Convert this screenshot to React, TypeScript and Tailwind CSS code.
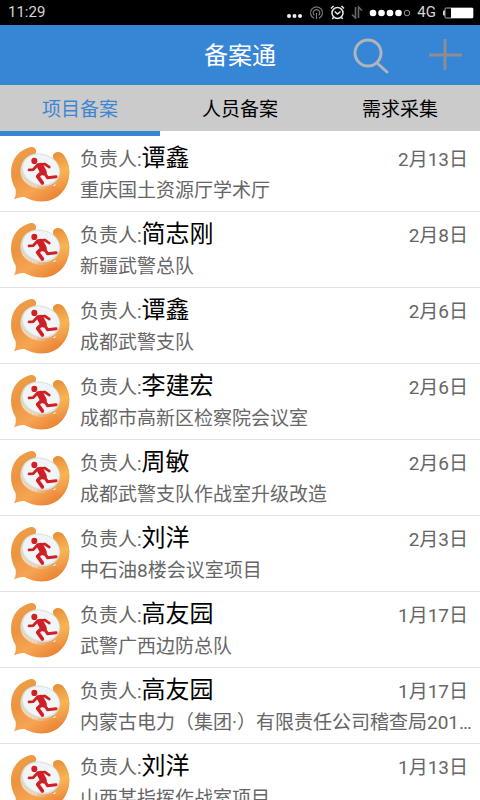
import React, { useState } from 'react';

const tabs = ['项目备案', '人员备案', '需求采集'];

const records = [
  { name: '谭鑫', project: '重庆国土资源厅学术厅', date: '2月13日' },
  { name: '简志刚', project: '新疆武警总队', date: '2月8日' },
  { name: '谭鑫', project: '成都武警支队', date: '2月6日' },
  { name: '李建宏', project: '成都市高新区检察院会议室', date: '2月6日' },
  { name: '周敏', project: '成都武警支队作战室升级改造', date: '2月6日' },
  { name: '刘洋', project: '中石油8楼会议室项目', date: '2月3日' },
  { name: '高友园', project: '武警广西边防总队', date: '1月17日' },
  { name: '高友园', project: '内蒙古电力（集团·）有限责任公司稽查局201…', date: '1月17日' },
  { name: '刘洋', project: '山西某指挥作战室项目', date: '1月13日' },
];

const StatusBar: React.FC = () => (
  <div className="flex h-[25px] shrink-0 items-center justify-between bg-black pl-2 pr-1.5 text-[#d4d4d4]">
    <span className="text-[15px] leading-none">11:29</span>
    <div className="flex items-center gap-1.5">
      <svg width="16" height="14" viewBox="0 0 16 14" fill="#f0f0f0">
        <circle cx="2" cy="10" r="2" />
        <circle cx="7.500" cy="10" r="2" />
        <circle cx="13" cy="10" r="2" />
      </svg>
      <svg width="15" height="14" viewBox="0 0 14 14" fill="none" stroke="#777" strokeWidth="1.200">
        <path d="M4.500 12.300A6 6 0 1 1 9.500 12.300" />
        <path d="M4.800 9.400A3.300 3.300 0 1 1 9.200 9.400" />
        <path d="M7 7v6" />
      </svg>
      <svg width="15" height="15" viewBox="0 0 15 15" fill="none" stroke="#e8e8e8" strokeWidth="1.500">
        <circle cx="7.500" cy="8" r="5.500" />
        <path d="M1 3.500L3.500 1M14 3.500L11.500 1M4.700 6.500L7.500 9l3-2.500M3.500 12.500L2.300 14M11.500 12.500l1.200 1.500" />
      </svg>
      <svg width="12" height="13" viewBox="0 0 12 13" fill="none" stroke="#666" strokeWidth="1.600">
        <path d="M4.500 1v11L1 8.500M7.500 12V1L11 4.500" />
      </svg>
      <svg width="42" height="10" viewBox="0 0 42 10" fill="#fff">
        <circle cx="4" cy="5" r="3.300" />
        <circle cx="12.500" cy="5" r="3.300" />
        <circle cx="21" cy="5" r="3.300" />
        <circle cx="29.500" cy="5" r="3.300" />
        <circle cx="38" cy="5" r="2.800" fill="none" stroke="#999" />
      </svg>
      <span className="text-[15px] leading-none">4G</span>
      <svg width="32" height="12" viewBox="0 0 32 12">
        <path d="M3 3.500H2a1 1 0 0 0-1 1v3a1 1 0 0 0 1 1h1z" fill="#ddd" />
        <rect x="3" y="1" width="28" height="10" rx="1" fill="#000" stroke="#aaa" />
        <rect x="9" y="1" width="22" height="10" fill="#fff" />
      </svg>
    </div>
  </div>
);

const RunnerBadge: React.FC = () => (
  <svg className="mt-2 shrink-0" width="60" height="60" viewBox="30 28 180 174" preserveAspectRatio="none" fill="none">
    <defs>
      <linearGradient id="shell" x1="50" y1="40" x2="150" y2="195" gradientUnits="userSpaceOnUse">
        <stop offset="0" stopColor="#f0a04c" />
        <stop offset="0.350" stopColor="#eb9440" />
        <stop offset="0.700" stopColor="#f6a555" />
        <stop offset="1" stopColor="#ea8533" />
      </linearGradient>
      <linearGradient id="arm" x1="160" y1="50" x2="200" y2="165" gradientUnits="userSpaceOnUse">
        <stop offset="0" stopColor="#e78a35" />
        <stop offset="0.500" stopColor="#f7b552" />
        <stop offset="1" stopColor="#f3a050" stopOpacity="0" />
      </linearGradient>
      <linearGradient id="rim" x1="65" y1="120" x2="150" y2="155" gradientUnits="userSpaceOnUse">
        <stop offset="0" stopColor="#dcd2be" />
        <stop offset="0.600" stopColor="#f0cda2" />
        <stop offset="1" stopColor="#e9a35c" />
      </linearGradient>
    </defs>
    <path
      d="M91 37C102 34 111 43 108 53C106 60 97 60 86 67L74 100L110 150H165L179 110L162 73C157 65 159 56 168 53C177 50 186 53 192 61C202 75 208 91 208 108C208 159 173 195 126 195C105 195 88 190 73 182C64 181 52 185 42 188C47 181 48 173 47 160C38 145 33 130 33 110C33 72 57 46 91 37Z"
      fill="url(#shell)"
    />
    <path d="M168 53C177 50 186 53 192 61C202 75 208 91 208 108C208 132 200 154 187 168L165 150L179 110L162 73C157 65 159 56 168 53Z" fill="url(#arm)" />
    <ellipse cx="119" cy="112" rx="59" ry="46" transform="rotate(14 119 112)" fill="url(#rim)" />
    <path d="M67 123l4 10M73 130l4 10M80 136l4 9M88 141l4 9M97 145l3 8M107 148l2 7" stroke="#f9eeda" strokeWidth="2" />
    <ellipse cx="122" cy="103" rx="59" ry="47" transform="rotate(14 122 103)" fill="#dadedd" />
    <ellipse cx="123" cy="102" rx="55" ry="43" transform="rotate(14 123 102)" fill="#f2f5f5" />
    <g stroke="#cf2027" strokeLinecap="round" strokeLinejoin="round">
      <path d="M87 103L100 102L113 88L134 86L148 95" strokeWidth="8" />
      <path d="M121 93L130 109" strokeWidth="20" />
      <path d="M124 112L113 122L127 141" strokeWidth="11" />
      <path d="M132 110L143 126L168 123" strokeWidth="9" />
    </g>
    <circle cx="103" cy="77" r="9" fill="#cf2027" />
  </svg>
);

export default function App() {
  const [activeTab, setActiveTab] = useState(0);

  return (
    <div className="flex h-screen flex-col overflow-hidden bg-white font-['Roboto','Noto_Sans_CJK_SC',sans-serif]" lang="zh-CN">
      <StatusBar />

      <header className="grid h-[60px] shrink-0 grid-cols-[1fr_auto_1fr] items-center bg-[#3785d5]">
        <h1 className="col-start-2 pt-0.5 text-2xl leading-none text-white">备案通</h1>
        <div className="flex items-center justify-end gap-9 pr-4">
          <button aria-label="搜索">
            <svg width="40" height="40" viewBox="0 0 40 40" fill="none" stroke="#b1b5bb" strokeWidth="3" strokeLinecap="round">
              <circle cx="16" cy="18" r="13" />
              <path d="M25 28l10 9" />
            </svg>
          </button>
          <button aria-label="添加">
            <svg width="36" height="36" viewBox="0 0 36 36" stroke="#8d8e91" strokeWidth="3">
              <path d="M17 2v31M1 18h33" />
            </svg>
          </button>
        </div>
      </header>

      <nav className="grid shrink-0 grid-cols-3">
        {tabs.map((tab, i) => (
          <button key={tab} onClick={() => setActiveTab(i)} className={`text-[19px] leading-none ${activeTab === i ? 'text-[#3f86d0]' : 'text-black'}`}>
            <span className="flex h-[46px] items-center justify-center bg-[#cbcbcb] pt-0.5">{tab}</span>
            <span className={`block h-[5px] ${activeTab === i ? 'bg-[#3785d5]' : 'bg-white'}`} />
          </button>
        ))}
      </nav>

      <ul className="min-h-0 flex-1 overflow-y-auto [scrollbar-width:none]">
        {records.map((r, i) => (
          <li key={i} className="flex h-[76px] border-b border-[#e2e2e2] pl-2.5 pr-1 text-[19px] text-[#666]">
            <RunnerBadge />
            <div className="min-w-0 flex-1 pl-2.5 pt-1.5">
              <div className="flex items-baseline justify-between pr-2 leading-8">
                <p>
                  负责人:<span className="text-2xl leading-8 text-black">{r.name}</span>
                </p>
                <time>{r.date}</time>
              </div>
              <p className="truncate leading-[30px]">{r.project}</p>
            </div>
          </li>
        ))}
      </ul>
    </div>
  );
}
